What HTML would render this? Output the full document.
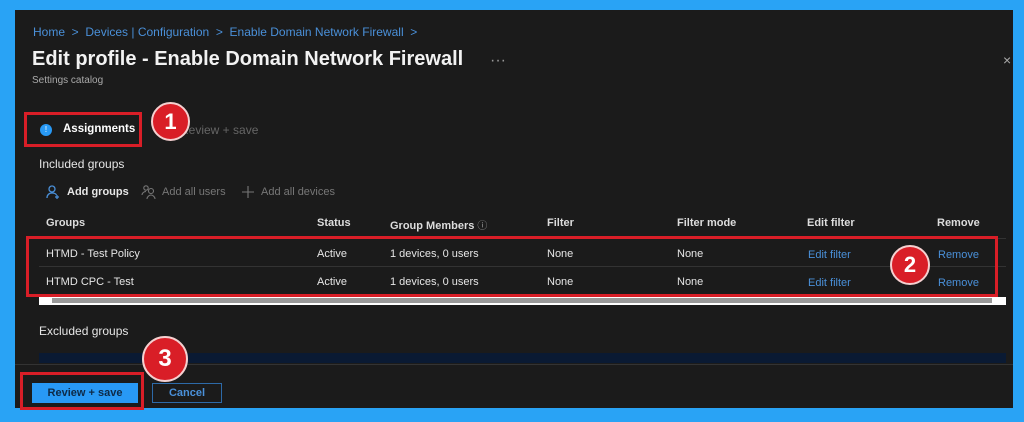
<!DOCTYPE html>
<html><head><meta charset="utf-8"><style>
*{margin:0;padding:0;box-sizing:border-box}
body{width:1024px;height:422px;background:#29a3f5;font-family:"Liberation Sans",sans-serif;position:relative;overflow:hidden;color:#e6e6e6}
.p{position:absolute;left:15px;top:10px;width:998px;height:398px;background:#1b1b1b}
.a{position:absolute;white-space:nowrap}
.t{font-size:11px}
.h{font-size:11px;font-weight:bold;color:#ddd}
.lk{color:#4a90d9}
.rb{position:absolute;border:3px solid #d91e27}
.c{position:absolute;border-radius:50%;background:#d91e27;color:#fff;font-weight:bold;text-align:center;border:2px solid #f5d0d0}
</style></head><body>
<div class="p"></div>
<div class="a t lk" style="left:33px;top:25px;font-size:12px">Home &nbsp;&gt;&nbsp; Devices | Configuration &nbsp;&gt;&nbsp; Enable Domain Network Firewall &nbsp;&gt;</div>
<div class="a" style="left:32px;top:48px;font-size:20px;font-weight:bold;color:#f2f2f2">Edit profile - Enable Domain Network Firewall</div>
<div class="a" style="left:490px;top:52px;color:#999">···</div>
<div class="a" style="left:1003px;top:52px;color:#aaa;font-size:14px">×</div>
<div class="a" style="left:32px;top:75px;font-size:10px;color:#aaa">Settings catalog</div>
<div class="a" style="left:40px;top:124px;width:12px;height:12px;border-radius:50%;background:#2899f5;color:#fff;font-size:8px;text-align:center;line-height:12px">!</div>
<div class="a" style="left:63px;top:123px;font-size:11.5px;font-weight:bold;color:#fff">Assignments</div>
<div class="rb" style="left:24px;top:112px;width:118px;height:35px"></div>
<div class="a" style="left:180px;top:123px;font-size:12px;color:#666">Review + save</div>
<div class="c" style="left:151px;top:102px;width:39px;height:39px;font-size:22px;line-height:35px">1</div>
<div class="a" style="left:39px;top:157px;font-size:12px">Included groups</div>
<svg class="a" style="left:45px;top:184px" width="16" height="16" viewBox="0 0 16 16" fill="none" stroke="#4a90d9" stroke-width="1.3"><circle cx="7" cy="5" r="3"/><path d="M2 14c0-3 2-5 5-5s4 1 4.5 2"/><path d="M12 11v4M10 13h4"/></svg>
<div class="a" style="left:67px;top:186px;font-size:11px;font-weight:bold">Add groups</div>
<svg class="a" style="left:141px;top:184px" width="16" height="16" viewBox="0 0 16 16" fill="none" stroke="#777" stroke-width="1.1"><circle cx="5" cy="4" r="2.2"/><circle cx="10" cy="7" r="2.5"/><path d="M1 11c0-2 2-3.5 4-3.5"/><path d="M6 15c0-2 2-4 4-4s4 2 4 4"/></svg>
<div class="a" style="left:162px;top:186px;font-size:11px;color:#777">Add all users</div>
<svg class="a" style="left:241px;top:185px" width="14" height="14" viewBox="0 0 14 14" stroke="#777" stroke-width="1.1"><path d="M7 1v12M1 7h12"/></svg>
<div class="a" style="left:261px;top:186px;font-size:11px;color:#777">Add all devices</div>
<div class="a h" style="left:46px;top:217px">Groups</div>
<div class="a h" style="left:317px;top:217px">Status</div>
<div class="a h" style="left:390px;top:217px">Group Members <span style="font-weight:normal;color:#999;font-size:10px">ⓘ</span></div>
<div class="a h" style="left:547px;top:217px">Filter</div>
<div class="a h" style="left:677px;top:217px">Filter mode</div>
<div class="a h" style="left:807px;top:217px">Edit filter</div>
<div class="a h" style="left:937px;top:217px">Remove</div>
<div class="a" style="left:39px;top:238px;width:967px;height:1px;background:#333"></div>
<div class="a" style="left:39px;top:266px;width:967px;height:1px;background:#333"></div>
<div class="a t" style="left:46px;top:248px">HTMD - Test Policy</div>
<div class="a t" style="left:317px;top:248px">Active</div>
<div class="a t" style="left:390px;top:248px">1 devices, 0 users</div>
<div class="a t" style="left:547px;top:248px">None</div>
<div class="a t" style="left:677px;top:248px">None</div>
<div class="a t lk" style="left:808px;top:249px">Edit filter</div>
<div class="a t lk" style="left:938px;top:249px">Remove</div>
<div class="a t" style="left:46px;top:276px">HTMD CPC - Test</div>
<div class="a t" style="left:317px;top:276px">Active</div>
<div class="a t" style="left:390px;top:276px">1 devices, 0 users</div>
<div class="a t" style="left:547px;top:276px">None</div>
<div class="a t" style="left:677px;top:276px">None</div>
<div class="a t lk" style="left:808px;top:277px">Edit filter</div>
<div class="a t lk" style="left:938px;top:277px">Remove</div>
<div class="a" style="left:39px;top:297px;width:967px;height:8px;background:#fff"></div>
<div class="a" style="left:52px;top:298px;width:940px;height:5px;background:#999"></div>
<div class="rb" style="left:26px;top:236px;width:972px;height:61px"></div>
<div class="c" style="left:890px;top:245px;width:40px;height:40px;font-size:22px;line-height:36px">2</div>
<div class="a" style="left:39px;top:324px;font-size:12px">Excluded groups</div>
<div class="a" style="left:39px;top:353px;width:967px;height:10px;background:#0a1a33"></div>
<div class="a" style="left:15px;top:364px;width:998px;height:1px;background:#333"></div>
<div class="a" style="left:32px;top:383px;width:106px;height:20px;background:#2899f5;color:#0e2a48;font-size:11px;font-weight:bold;text-align:center;line-height:20px">Review + save</div>
<div class="a" style="left:152px;top:383px;width:70px;height:20px;border:1px solid #2d6aa8;color:#4a90d9;font-size:11px;font-weight:bold;text-align:center;line-height:18px">Cancel</div>
<div class="rb" style="left:20px;top:372px;width:124px;height:38px"></div>
<div class="c" style="left:142px;top:336px;width:46px;height:46px;font-size:24px;line-height:42px">3</div>
</body></html>
